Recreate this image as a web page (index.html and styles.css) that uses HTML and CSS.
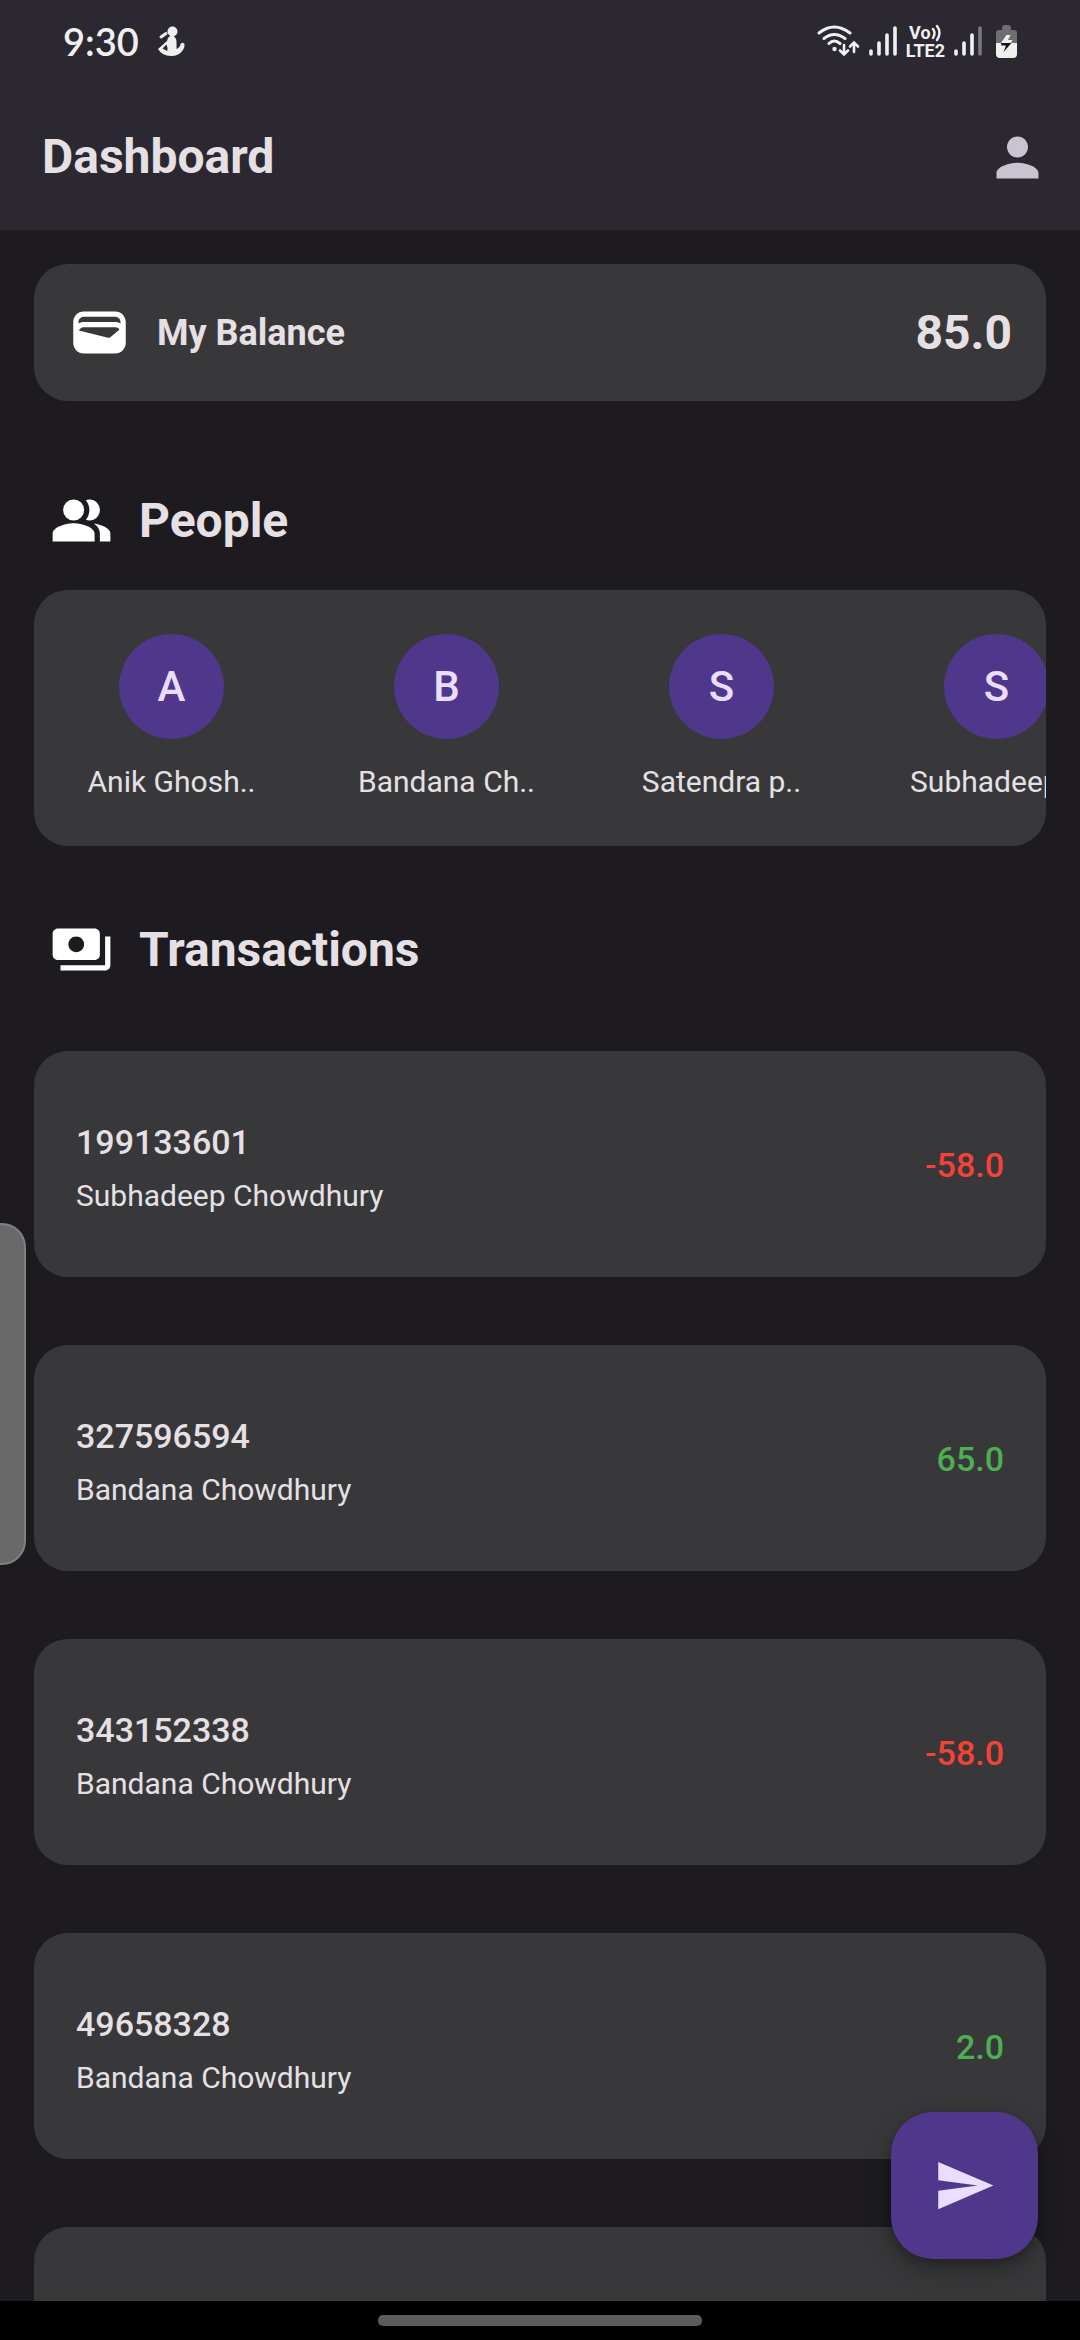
FILE: index.html
```html
<!DOCTYPE html>
<html lang="en">
<head>
  <meta charset="utf-8">
  <meta name="viewport" content="width=device-width, initial-scale=1">
  <title>Dashboard</title>
  <link rel="stylesheet" href="styles.css">
</head>
<body>
  <header class="top">
    <div class="status">
      <div class="status-group">
        <span class="clock">9:30</span>
        <svg class="status-figure" viewBox="0 0 28 32" width="28" height="32" aria-hidden="true">
          <circle cx="15.500" cy="6.500" r="5"/>
          <path fill-rule="evenodd" d="M13 11q-3 2-3 5l-9 8q4 7 13 7 8 0 12-6 2-3 1.500-6-2-2.500-4 0 0 3-4 5V17q0-4-3-6zM9.500 19.500q1.500 3 .8 6.500L5.500 23.500z"/>
          <path d="M4 12l5-3.500" class="figure-arm"/>
        </svg>
      </div>
      <div class="status-group status-right">
        <svg viewBox="0 0 44 34" width="44" height="34" class="stroke" aria-hidden="true">
          <path d="M3 9q15-12 31 0M8 14.500q10-8 21 0M13 19.500q5-5 11 0" stroke-width="3"/>
          <circle cx="18.500" cy="25" r="2.200" class="solid"/>
          <path d="M28 21v9M24 26.500l4 4 4-4M38 28v-9M34 22.500l4-4 4 4" stroke-width="2.600"/>
        </svg>
        <svg viewBox="0 0 28 32" width="28" height="32" class="stroke" aria-hidden="true">
          <path d="M2 26v3M10 18v11M18 10v19M26 3v26" stroke-width="3.600"/>
        </svg>
        <div class="volte">
          <span class="volte-top">Vo<svg viewBox="0 0 11 18" width="11" height="18" class="stroke" aria-hidden="true"><path d="M2 5q3 4 0 9M6 2q5 6.500 0 14" stroke-width="2.400"/></svg></span>
          <span>LTE2</span>
        </div>
        <svg viewBox="0 0 28 32" width="28" height="32" class="stroke" aria-hidden="true">
          <path d="M2 26v3M10 18v11M18 10v19" stroke-width="3.600"/>
          <path d="M26 3v26" stroke-width="3.600" opacity=".4"/>
        </svg>
        <svg class="battery" viewBox="0 0 21 33" width="21" height="33" aria-hidden="true">
          <path d="M0 18V8q0-3 3-3h3V3q0-3 3-3h3q3 0 3 3v2h3q3 0 3 3v10z" fill="#6f6d73"/>
          <path d="M0 18h21v11q0 4-4 4H4q-4 0-4-4z" fill="#f0f0f0"/>
          <path d="M10.500 10h4l-2.500 5h4.500l-1.500 3H5z" fill="#f0f0f0"/>
          <path d="M5 18h10.500L7.500 27l2.500-6.500H5.500z" fill="#141316"/>
        </svg>
      </div>
    </div>
    <div class="app-bar">
      <h1 class="title">Dashboard</h1>
      <button class="profile" type="button" aria-label="Profile">
        <svg class="icon" viewBox="0 0 24 24" aria-hidden="true"><path d="M12 12c2.210 0 4-1.790 4-4s-1.790-4-4-4-4 1.790-4 4 1.790 4 4 4zm0 2c-2.670 0-8 1.340-8 4v2h16v-2c0-2.660-5.330-4-8-4z"/></svg>
      </button>
    </div>
  </header>

  <main class="content">
    <section class="card balance">
      <svg class="icon" viewBox="0 0 24 24" aria-hidden="true"><path fill-rule="evenodd" d="M18 4H6C3.790 4 2 5.790 2 8v8c0 2.210 1.790 4 4 4h12c2.210 0 4-1.790 4-4V8c0-2.210-1.790-4-4-4zM16.140 13.770c-.24.2-.57.280-.88.2L4.150 11.250C4.450 10.520 5.160 10 6 10h12c.67 0 1.260.34 1.630.84L16.140 13.770zM18 6c1.100 0 2 .9 2 2v.55C19.410 8.210 18.730 8 18 8H6C5.270 8 4.590 8.210 4 8.550V8c0-1.100.9-2 2-2H18z"/></svg>
      <h2 class="balance-label">My Balance</h2>
      <span class="balance-value">85.0</span>
    </section>

    <h2 class="section-title people-title">
      <svg class="icon" viewBox="0 0 24 24" aria-hidden="true"><circle cx="9" cy="8" r="4"/><path d="M16.670 13.130C18.040 14.060 19 15.320 19 17v3h4v-3c0-2.180-3.570-3.470-6.330-3.870zM15 12c2.210 0 4-1.790 4-4s-1.790-4-4-4c-.47 0-.91.1-1.330.24C14.500 5.270 15 6.580 15 8s-.5 2.730-1.330 3.760c.42.14.86.24 1.330.24zM9 13c-2.670 0-8 1.340-8 4v3h16v-3c0-2.660-5.330-4-8-4z"/></svg>
      People
    </h2>
    <ul class="card people">
      <li><button class="person" type="button"><span class="avatar">A</span><span>Anik Ghosh..</span></button></li>
      <li><button class="person" type="button"><span class="avatar">B</span><span>Bandana Ch..</span></button></li>
      <li><button class="person" type="button"><span class="avatar">S</span><span>Satendra p..</span></button></li>
      <li><button class="person" type="button"><span class="avatar">S</span><span>Subhadeep ..</span></button></li>
    </ul>

    <h2 class="section-title transactions-title">
      <svg class="icon" viewBox="0 0 24 24" aria-hidden="true"><path d="M19 14V6c0-1.100-.9-2-2-2H3c-1.100 0-2 .9-2 2v8c0 1.100.9 2 2 2h14c1.100 0 2-.9 2-2zm-9-1c-1.660 0-3-1.340-3-3s1.340-3 3-3 3 1.340 3 3-1.340 3-3 3zm13-6v11c0 1.100-.9 2-2 2H4v-2h17V7h2z"/></svg>
      Transactions
    </h2>
    <ul class="transactions">
      <li class="card transaction">
        <div class="details"><span class="number">199133601</span><span class="name">Subhadeep Chowdhury</span></div>
        <span class="amount debit">-58.0</span>
      </li>
      <li class="card transaction">
        <div class="details"><span class="number">327596594</span><span class="name">Bandana Chowdhury</span></div>
        <span class="amount credit">65.0</span>
      </li>
      <li class="card transaction">
        <div class="details"><span class="number">343152338</span><span class="name">Bandana Chowdhury</span></div>
        <span class="amount debit">-58.0</span>
      </li>
      <li class="card transaction">
        <div class="details"><span class="number">49658328</span><span class="name">Bandana Chowdhury</span></div>
        <span class="amount credit">2.0</span>
      </li>
      <li class="card transaction"></li>
    </ul>
  </main>

  <button class="send" type="button" aria-label="Send money">
    <svg class="icon" viewBox="0 0 24 24" aria-hidden="true"><path d="M2 3l21 9-21 9v-7l15-2-15-2z"/></svg>
  </button>
  <div class="edge-handle"></div>
  <footer class="nav-bar"><div class="nav-pill"></div></footer>
</body>
</html>
```
FILE: styles.css
```css
* {
  box-sizing: border-box;
}

body {
  margin: 0;
  height: 100vh;
  display: flex;
  flex-direction: column;
  overflow: hidden;
  background: #1d1b20;
  color: #e6e0e5;
  font-family: Roboto, "Liberation Sans", sans-serif;
}

h1,
h2,
ul {
  margin: 0;
  padding: 0;
}

ul {
  list-style: none;
}

button {
  border: 0;
  padding: 0;
  background: none;
  color: inherit;
  font: inherit;
}

svg {
  display: block;
  flex: none;
}

.icon {
  width: 63px;
  height: 63px;
  fill: currentColor;
}

/* Status bar and app bar */
.top {
  flex: none;
  background: #2b2831;
}

.status {
  height: 82px;
  padding: 0 63px;
  display: flex;
  align-items: center;
  justify-content: space-between;
  color: #f0f0f0;
}

.status-group {
  display: flex;
  align-items: center;
  gap: 18px;
}

.status-right {
  gap: 9px;
}

.clock {
  font-family: Lato, sans-serif;
  font-size: 38px;
  font-weight: 600;
  line-height: 48px;
}

.status-figure {
  fill: currentColor;
}

.figure-arm {
  stroke: currentColor;
  stroke-width: 3;
  stroke-linecap: round;
}

.stroke {
  fill: none;
  stroke: currentColor;
  stroke-linecap: round;
}

.solid {
  fill: currentColor;
  stroke: none;
}

.volte {
  display: flex;
  flex-direction: column;
  align-items: center;
  font-size: 18px;
  font-weight: 700;
  line-height: 17px;
}

.volte-top {
  display: flex;
}

.battery {
  margin-left: 5px;
}

.app-bar {
  height: 148px;
  padding: 2px 31px 0 42px;
  display: flex;
  align-items: center;
  justify-content: space-between;
}

.title {
  font-size: 48px;
  font-weight: 700;
  line-height: 56px;
}

.profile {
  color: #cac4d0;
}

/* Scrolling content */
.content {
  flex: 1;
  min-height: 0;
  overflow: hidden;
  padding: 34px 34px 0;
}

.card {
  border-radius: 34px;
  background: #38383a;
}

.balance {
  height: 137px;
  padding: 0 34px;
  display: flex;
  align-items: center;
  gap: 26px;
}

.balance .icon,
.section-title .icon {
  color: #fff;
}

.balance-label {
  flex: 1;
  font-size: 36px;
  font-weight: 700;
}

.balance-value {
  font-size: 48px;
  font-weight: 700;
}

.section-title {
  padding-left: 16px;
  display: flex;
  align-items: center;
  gap: 26px;
  font-size: 48px;
  font-weight: 700;
  line-height: 56px;
}

.people-title {
  margin: 88px 0 38px;
}

.transactions-title {
  margin: 72px 0 70px;
}

.people {
  display: grid;
  grid-auto-flow: column;
  grid-auto-columns: 275px;
  padding: 44px 0 46px;
  overflow: hidden;
}

.person {
  width: 100%;
  display: flex;
  flex-direction: column;
  align-items: center;
  gap: 25px;
  font-size: 30px;
  line-height: 36px;
}

.avatar {
  width: 105px;
  height: 105px;
  display: grid;
  place-items: center;
  border-radius: 50%;
  background: #4f378b;
  color: #eaddff;
  font-size: 42px;
  font-weight: 500;
}

.transactions {
  display: flex;
  flex-direction: column;
  gap: 68px;
}

.transaction {
  min-height: 226px;
  padding: 2px 42px 0;
  display: flex;
  align-items: center;
  justify-content: space-between;
}

.details {
  padding-top: 6px;
  display: flex;
  flex-direction: column;
  gap: 16px;
}

.number,
.amount {
  font-size: 34px;
  font-weight: 500;
  line-height: 40px;
}

.name {
  font-size: 30px;
  line-height: 36px;
}

.debit {
  color: #f44336;
}

.credit {
  color: #4caf50;
}

/* Floating controls */
.send {
  position: fixed;
  right: 42px;
  bottom: 81px;
  width: 147px;
  height: 147px;
  display: grid;
  place-items: center;
  border-radius: 42px;
  background: #4f378b;
  color: #eaddff;
  box-shadow: 0 10px 26px rgba(0, 0, 0, 0.3), 0 4px 10px rgba(0, 0, 0, 0.2);
}

.edge-handle {
  position: fixed;
  left: 0;
  top: 1223px;
  width: 26px;
  height: 342px;
  border: 2px solid #808081;
  border-left: 0;
  border-radius: 0 24px 24px 0;
  background: #69696a;
}

.nav-bar {
  position: relative;
  flex: none;
  height: 39px;
  display: grid;
  place-items: center;
  background: #000;
}

.nav-pill {
  width: 30%;
  height: 11px;
  border-radius: 5px;
  background: #5c5c5c;
}
```
